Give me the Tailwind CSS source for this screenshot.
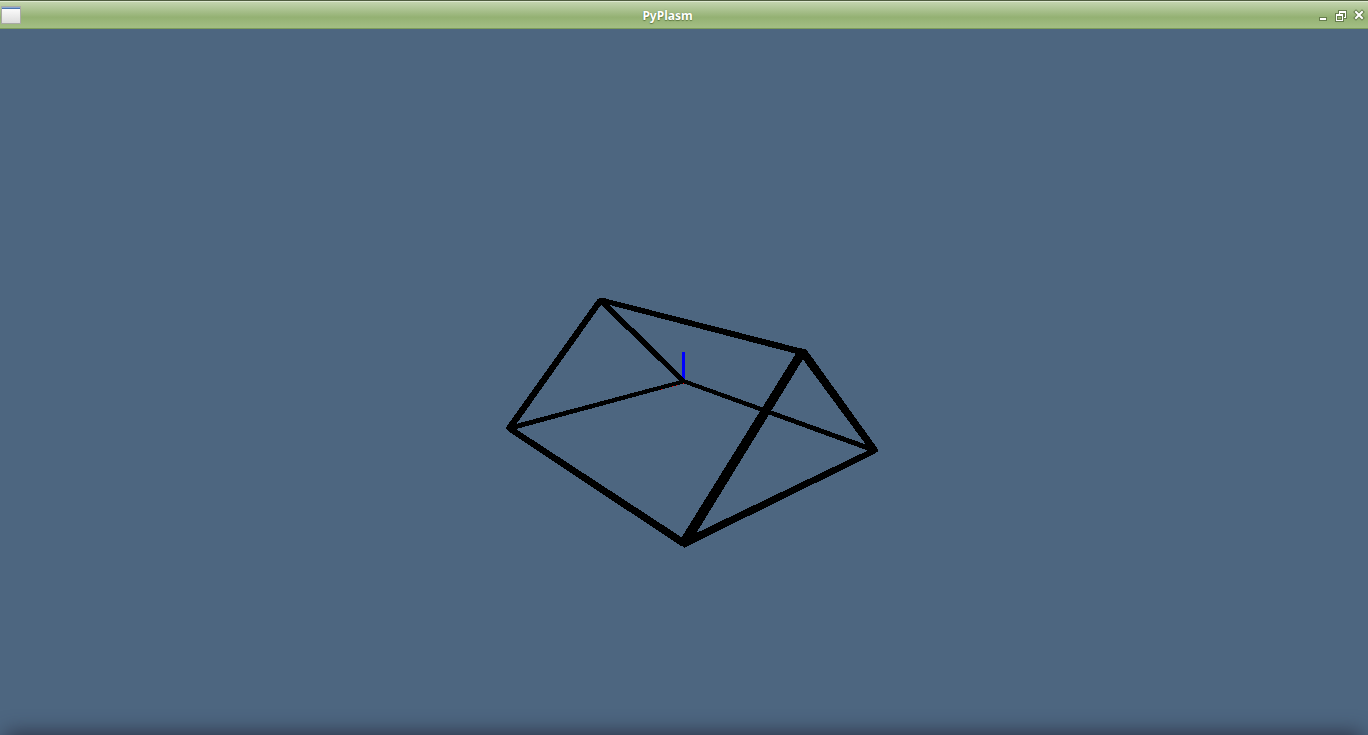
<!DOCTYPE html>
<html lang="en">
<head>
<meta charset="utf-8">
<title>PyPlasm</title>
<script src="https://cdn.jsdelivr.net/npm/@tailwindcss/browser@4"></script>
</head>
<body class="flex h-screen flex-col overflow-hidden bg-[#4d6680] font-['Noto_Sans','Open_Sans',sans-serif]">
<header class="flex h-[29px] shrink-0 items-center border-t border-b border-t-[#4f5c3f] border-b-[#7d9c5c] bg-linear-to-b from-[#c6d6b2] via-[#94b173] via-60% to-[#a3bf84] pl-px shadow-[inset_0_1px_0_#dde8d0]">
  <svg class="h-5 w-5" viewBox="0 0 20 20" shape-rendering="crispEdges" aria-hidden="true">
    <defs><linearGradient id="w" x1="0" y1="0" x2="0" y2="1"><stop offset="0" stop-color="#fff"/><stop offset="1" stop-color="#dcdcdc"/></linearGradient></defs>
    <rect y="1" width="20" height="18" fill="#a9aaa5"/>
    <rect x="1" y="2" width="18" height="16" fill="url(#w)"/>
    <rect x="1" y="2" width="18" height="1" fill="#89a7d3"/>
    <rect x="1" y="3" width="18" height="1" fill="#4a72ae"/>
  </svg>
  <h1 class="flex-1 pt-0.5 text-center text-[12px] leading-4 font-bold text-white [text-shadow:0_0_1px_#5f7a43,0_1px_1px_#5f7a43]">PyPlasm</h1>
  <div class="flex justify-end">
    <button class="h-[18px] w-[18px]" aria-label="Minimize">
      <svg class="h-[18px] w-[18px]" viewBox="0 0 18 18" shape-rendering="crispEdges"><path fill="#667d4d" d="M5 11h8v4H5z"/><path fill="#fff" d="M6 12h6v2H6z"/></svg>
    </button>
    <button class="h-[18px] w-[18px]" aria-label="Restore">
      <svg class="h-[18px] w-[18px]" viewBox="0 0 18 18" shape-rendering="crispEdges"><path fill="#667d4d" d="M6 4h9v9h-3v3H3V7h3z"/><path fill="#fff" d="M7 5h7v7h-2v-1h1V7H8v1H7zM4 8h7v7H4z"/><path fill="#667d4d" d="M5 10h5v4H5z"/><path fill="#9bb77b" d="M6 11h3v2H6z"/></svg>
    </button>
    <button class="h-[18px] w-[18px]" aria-label="Close">
      <svg class="h-[18px] w-[18px]" viewBox="0 0 18 18" fill="none" stroke-linecap="square"><path stroke="#667d4d" stroke-width="4" d="M6 6l6 6M12 6l-6 6"/><path stroke="#fff" stroke-width="2" d="M6 6l6 6M12 6l-6 6"/></svg>
    </button>
  </div>
</header>
<main class="relative min-h-0 flex-1 overflow-hidden">
  <svg class="block h-full w-full" viewBox="0 29 1368 706" shape-rendering="crispEdges" role="img" aria-label="Wireframe prism">
    <path fill="#f00" d="M661 389h1v1h-1zM672 386h1v1h-1zM676 385h1v1h-1zM683 383h1v1h-1z"/>
    <path fill="#00f" d="M682 352h3v28h-3z"/>
    <g fill="#000">
      <polygon points="600.4,302.6 602,297.6 803,349 801,355"/>
      <polygon points="603,302 598,298.6 506.6,426.4 512,430.2"/>
      <polygon points="598.5,302.4 602.7,298.2 685.4,379.5 681.8,383.1"/>
      <polygon points="510,430.7 508.6,425.9 683.5,379.4 684.5,383.2"/>
      <polygon points="683.3,383.2 684.7,379.4 875.6,448 873.8,452.8"/>
      <polygon points="799,354 806,349 877.4,448.4 871.8,452.6"/>
      <polygon points="806.3,353.8 798.7,349 679.4,540.8 688.2,546.2"/>
      <polygon points="507.8,430.9 511.2,425.9 686,540.2 681.8,546.6"/>
      <polygon points="876,453.2 873.4,447.8 682.2,539.8 685.6,547"/>
      <polygon points="598,299 600,298 604,298 603,302"/>
      <polygon points="506,427 507,430 510,432 512,427"/>
      <polygon points="800,348 804,349 807,352 803,353"/>
      <polygon points="875,448 878,449 878,452 874,453"/>
      <polygon points="680,541 684,548 688,545 684,539"/>
    </g>
  </svg>
  <div class="pointer-events-none absolute inset-x-2 top-full h-5 shadow-[0_0_20px_2px_#2c3346]"></div>
</main>
</body>
</html>
